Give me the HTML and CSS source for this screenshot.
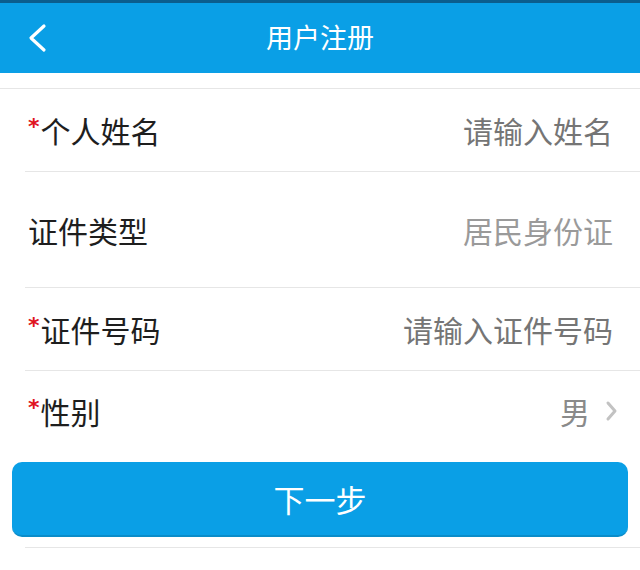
FILE: index.html
```html
<!DOCTYPE html>
<html lang="zh-CN">
<head>
<meta charset="utf-8">
<title>用户注册</title>
<link rel="stylesheet" href="styles.css">
</head>
<body>
<header class="topbar">
  <span class="back">
    <svg width="20" height="30" viewBox="0 0 20 30"><polyline points="16,3 3,15 16,27" fill="none" stroke="#fff" stroke-width="3.2" stroke-linecap="round" stroke-linejoin="round"/></svg>
  </span>
  <h1 class="title">用户注册</h1>
</header>
<div class="spacer"></div>
<form class="form">
  <div class="row">
    <span class="label"><i class="req">*</i>个人姓名</span>
    <span class="value placeholder">请输入姓名</span>
  </div>
  <div class="row row-tall">
    <span class="label">证件类型</span>
    <span class="value light">居民身份证</span>
  </div>
  <div class="row">
    <span class="label"><i class="req">*</i>证件号码</span>
    <span class="value placeholder">请输入证件号码</span>
  </div>
  <div class="row row-last">
    <span class="label"><i class="req">*</i>性别</span>
    <span class="value select">男
      <svg class="chev" width="14" height="22" viewBox="0 0 14 22"><polyline points="4,3 11,11 4,19" fill="none" stroke="#c2c2c2" stroke-width="3" stroke-linecap="round" stroke-linejoin="round"/></svg>
    </span>
  </div>
  <div class="actions">
    <button type="button" class="btn">下一步</button>
  </div>
  <div class="footline"></div>
</form>
</body>
</html>
```

FILE: styles.css
```css
* { box-sizing: border-box; }
html, body {
  margin: 0;
  padding: 0;
  background: #fff;
  font-family: "Noto Sans CJK SC", "Noto Sans", sans-serif;
}
.topbar {
  height: 73px;
  border-top: 3px solid #0b5d8d;
  background: #0a9fe6;
  display: flex;
  align-items: center;
  justify-content: center;
  position: relative;
}
.back {
  position: absolute;
  left: 28px;
  top: 20px;
  display: flex;
}
.title {
  margin: 0;
  color: #fff;
  font-size: 27px;
  font-weight: 400;
  line-height: 1;
  margin-top: -3px;
}
.spacer { height: 15px; }
.form {
  margin: 0;
  border-top: 1px solid #e6e6e6;
}
.row {
  height: 83px;
  margin-left: 25px;
  padding: 0 27px 0 3px;
  border-bottom: 1px solid #e6e6e6;
  display: flex;
  align-items: center;
  justify-content: space-between;
}
.row-tall { height: 116px; }
.row-last { border-bottom: none; height: 79px; padding-right: 22px; }
.label {
  font-size: 30px;
  line-height: 1;
  color: #1e1e1e;
  display: flex;
  align-items: flex-start;
}
.req {
  font-style: normal;
  color: #e0141e;
  font-size: 22px;
  line-height: 1;
  margin-top: 1px;
  margin-right: 1px;
  font-family: "DejaVu Sans", sans-serif;
  font-weight: 700;
}
.value {
  font-size: 30px;
  line-height: 1;
}
.placeholder { color: #757575; }
.light { color: #9a9a9a; }
.select {
  color: #8a8a8a;
  display: flex;
  align-items: center;
  gap: 14px;
}
.actions {
  padding: 12px 12px 0;
}
.btn {
  width: 100%;
  height: 75px;
  border: none;
  border-bottom: 2px solid #0a8cc9;
  border-radius: 10px;
  background: #0a9fe6;
  color: #fff;
  font-family: "Noto Sans CJK SC", sans-serif;
  font-size: 31px;
  padding: 0;
  line-height: 1;
}
.footline {
  margin-top: 10px;
  margin-left: 25px;
  border-top: 1px solid #e6e6e6;
}
```
